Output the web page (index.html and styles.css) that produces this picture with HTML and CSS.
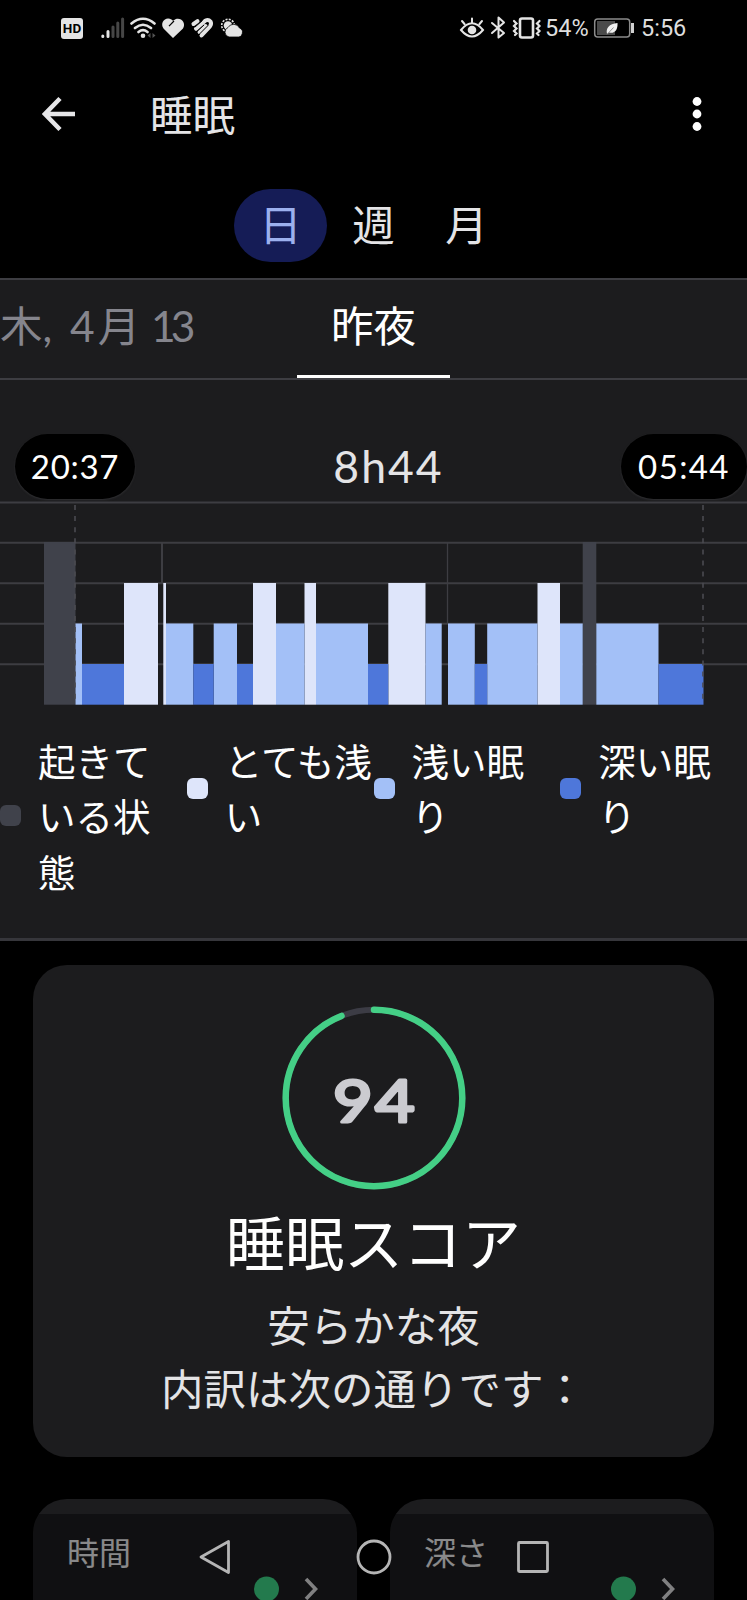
FILE: index.html
```html
<!DOCTYPE html>
<html lang="ja">
<head>
    <meta charset="UTF-8">
    <meta name="viewport" content="width=device-width, initial-scale=1.0">
    <title>睡眠</title>
    <link rel="stylesheet" href="styles.css">
</head>
<body>

    <div class="status">
        <svg class="status-left" width="190" height="26" viewBox="58 15 190 26">
            <rect x="61" y="18" width="22" height="21" rx="3" fill="#e4e4e4"/>
            <text x="72" y="33.300" class="hd">HD</text>
            <g stroke-width="3" stroke-linecap="round">
                <path d="M102.800 36v.5M108 31.500v5" stroke="#e4e4e4"/>
                <path d="M113 27v9.500M117.800 23v13.500M122.600 19v17.500" stroke="#464646"/>
            </g>
            <g fill="none" stroke="#e4e4e4" stroke-width="2.600" stroke-linecap="round">
                <path d="M131.500 23.500q11.500-9.500 23 0M135 28q8-6.500 16 0M138.500 32q4.500-3.600 9 0"/>
            </g>
            <circle cx="143" cy="35.800" r="2.300" fill="#e4e4e4"/>
            <path d="M150.500 33v5l-3-2.500zM152.500 33v5l3-2.500z" fill="#555"/>
            <path d="M173 38l-9.500-9.500c-4-6 2-12.500 8-9l1.500 1.200c6-5.500 14 1 10 7.800z" fill="#e4e4e4"/>
            <path d="M174 21l-5 5.200" stroke="#000" stroke-width="1.200"/>
            <g fill="none" stroke="#e4e4e4" stroke-width="4" stroke-linecap="round" stroke-linejoin="round">
                <path d="M193.500 24l4-2.800M196 28.800l9.500-8.300q3-1.300 5 1 1.300 2.500-.5 4.800L201.500 35.500M199.500 32l6-6"/>
            </g>
            <path d="M195 27l7.500-6.500M198.500 35l9.500-9.500M197 31.500l7-6.500" stroke="#000" stroke-width="1"/>
            <circle cx="228" cy="25.500" r="6.300" fill="none" stroke="#e4e4e4" stroke-width="1.600" stroke-dasharray="2 1.300"/>
            <circle cx="228" cy="25.500" r="4.300" fill="#e4e4e4"/>
            <path d="M229 37a5 5 0 0 1-1-9.500 6.500 6.500 0 0 1 11.500.5 4.700 4.700 0 0 1-2.500 9z" fill="#e4e4e4" stroke="#000" stroke-width=".8"/>
        </svg>
        <svg class="status-icons" width="84" height="26" viewBox="458 15 84 26">
            <g fill="none" stroke="#e4e4e4" stroke-width="2" stroke-linecap="round">
                <path d="M461 30q11-13.500 22 0-11 13-22 0zM472 22.500v-4M464.500 24l-2.500-3M479.500 24l2.500-3"/>
                <path d="M492 23l12 10-5.500 4.500V17.500l5.500 5-12 10.500" stroke-linejoin="round"/>
                <rect x="520" y="18.500" width="13" height="19" rx="2" stroke-width="2.600"/>
                <path d="M514 21l2.500 2.500-2.500 2.500 2.500 2.500-2.500 2.500 2.500 2.500-1.500 1.500M539.500 21l-2.500 2.500 2.500 2.500-2.500 2.500 2.500 2.500-2.500 2.500 1.500 1.500" stroke-width="2.200"/>
            </g>
            <circle cx="472" cy="30" r="4.300" fill="#e4e4e4"/>
        </svg>
        <span class="status-text">54%</span>
        <svg class="battery" width="42" height="22" viewBox="593 17 42 22">
            <rect x="594.700" y="19" width="35" height="18" rx="3" fill="none" stroke="#8a8a8a" stroke-width="1.500"/>
            <rect x="597" y="21" width="18" height="14" fill="#4a4a4a"/>
            <path d="M631 23h3v10h-3z" fill="#d0d0d0"/>
            <path d="M607 34c-1.500-6 2-10 10.500-11 .5 7-3 11-8.500 9.500z" fill="#f0f0f0"/>
            <path d="M607 34.500l6.500-7" stroke="#777" stroke-width=".8"/>
        </svg>
        <span class="status-text clock">5:56</span>
    </div>

    <header class="appbar">
        <svg width="34" height="36" viewBox="0 0 34 36">
            <path d="M33 18H3M18 2.500L3 18 18 33.500" fill="none" stroke="#e6e6e8" stroke-width="4.500"/>
        </svg>
        <h1>睡眠</h1>
        <svg width="10" height="36" viewBox="0 0 10 36" fill="#fff">
            <circle cx="5" cy="5.500" r="4.400"/>
            <circle cx="5" cy="18" r="4.400"/>
            <circle cx="5" cy="30.500" r="4.400"/>
        </svg>
    </header>

    <nav class="periods">
        <span class="period active">日</span>
        <span class="period">週</span>
        <span class="period">月</span>
    </nav>

    <section class="panel">
        <div class="dates">
            <span class="date">木, <span class="month">4</span>月 <span class="day">13</span></span>
            <span class="date current">昨夜</span>
            <span></span>
        </div>

        <div class="times">
            <span class="time">20:37</span>
            <span class="total">8h44</span>
            <span class="time end">05:44</span>
        </div>

        <svg class="chart" width="747" height="205" viewBox="0 501 747 205">
            <g class="grid">
                <path d="M0 502.500h747M0 542.800h747M0 583.200h747M0 623.800h747M0 664.200h747"/>
                <path d="M162 542v41"/>
                <path d="M447.500 542v81" stroke-width="1.300"/>
            </g>
            <g class="awake">
                <rect x="44" y="542" width="31.500" height="162.700"/>
                <rect x="582.700" y="542" width="13.600" height="162.700"/>
            </g>
            <g class="very-light">
                <rect x="124" y="583" width="34" height="121.700"/>
                <rect x="163.300" y="583" width="2.700" height="121.700"/>
                <rect x="253" y="583" width="23" height="121.700"/>
                <rect x="304.500" y="583" width="11.500" height="121.700"/>
                <rect x="388.300" y="583" width="37.200" height="121.700"/>
                <rect x="537.500" y="583" width="22.500" height="121.700"/>
            </g>
            <g class="light">
                <rect x="75.500" y="623.500" width="6.500" height="81.200"/>
                <rect x="166" y="623.500" width="27.300" height="81.200"/>
                <rect x="213.700" y="623.500" width="23.300" height="81.200"/>
                <rect x="276" y="623.500" width="28.500" height="81.200"/>
                <rect x="316" y="623.500" width="52" height="81.200"/>
                <rect x="425.500" y="623.500" width="16.200" height="81.200"/>
                <rect x="448" y="623.500" width="26.800" height="81.200"/>
                <rect x="487.200" y="623.500" width="50.300" height="81.200"/>
                <rect x="560" y="623.500" width="22.700" height="81.200"/>
                <rect x="596.300" y="623.500" width="62.200" height="81.200"/>
            </g>
            <g class="deep">
                <rect x="82" y="664" width="42" height="40.700"/>
                <rect x="193.300" y="664" width="20.400" height="40.700"/>
                <rect x="237" y="664" width="16" height="40.700"/>
                <rect x="368" y="664" width="20.300" height="40.700"/>
                <rect x="474.800" y="664" width="12.400" height="40.700"/>
                <rect x="658.500" y="664" width="45" height="40.700"/>
            </g>
            <path class="dashes" d="M75 505v199M703 505v199"/>
        </svg>

        <ul class="legend">
            <li><i class="swatch awake"></i><span>起きて<br>いる状<br>態</span></li>
            <li><i class="swatch very-light"></i><span>とても浅<br>い</span></li>
            <li><i class="swatch light"></i><span>浅い眠<br>り</span></li>
            <li><i class="swatch deep"></i><span>深い眠<br>り</span></li>
        </ul>
    </section>

    <section class="score">
        <svg width="184" height="184" viewBox="0 0 184 184">
            <circle cx="92" cy="92" r="88.300" fill="none" stroke="#3c3c45" stroke-width="6"/>
            <circle class="ring" cx="92" cy="92" r="88.300" pathLength="100" transform="rotate(-90 92 92)"/>
            <text class="points" transform="translate(93 116) scale(1.18 1)">94</text>
        </svg>
        <h2>睡眠スコア</h2>
        <p>安らかな夜<br>内訳は次の通りです：</p>
    </section>

    <div class="tiles">
        <div class="tile">
            <h3>時間</h3>
            <div class="more">
                <span></span>
                <svg width="25" height="26" viewBox="0 0 25 26"><circle cx="12.500" cy="13" r="12.500" fill="#3bcb80"/></svg>
                <svg width="16" height="26" viewBox="0 0 16 26"><path d="M3 3l9.500 10L3 23" fill="none" stroke="#d5d5d8" stroke-width="3.600"/></svg>
            </div>
        </div>
        <div class="tile">
            <h3>深さ</h3>
            <div class="more">
                <span>十</span>
                <svg width="25" height="26" viewBox="0 0 25 26"><circle cx="12.500" cy="13" r="12.500" fill="#3bcb80"/></svg>
                <svg width="16" height="26" viewBox="0 0 16 26"><path d="M3 3l9.500 10L3 23" fill="none" stroke="#d5d5d8" stroke-width="3.600"/></svg>
            </div>
        </div>
    </div>

    <!-- Android navigation bar, over the page -->
    <div class="navbar">
        <svg width="36" height="36" viewBox="0 0 36 36"><path d="M31.500 2.500v31L4 18z"/></svg>
        <svg width="36" height="36" viewBox="0 0 36 36"><circle cx="18" cy="18" r="16"/></svg>
        <svg width="36" height="36" viewBox="0 0 36 36"><rect x="3.500" y="3.500" width="29" height="29" rx="1"/></svg>
    </div>

</body>
</html>
```

FILE: styles.css
```css
* {
    box-sizing: border-box;
}

body {
    margin: 0;
    width: 747px;
    height: 1600px;
    position: relative;
    overflow: hidden;
    background: #000;
    color: #e4e4e6;
    font-family: Lato, "Noto Sans CJK JP", sans-serif;
}

h1, h2, h3, p, ul {
    margin: 0;
    padding: 0;
    font-weight: 400;
}

svg {
    display: block;
    flex: none;
}

/* status bar */
.status {
    display: flex;
    align-items: center;
    height: 56px;
    padding-left: 58px;
}

.status-icons {
    margin-left: 210px;
}

.status-text {
    width: 51px;
    padding-left: 3px;
    font: 23.5px/57px Roboto, sans-serif;
    color: #dedede;
}

.clock {
    padding-left: 6px;
}

.hd {
    font: bold 13.5px Roboto, sans-serif;
    text-anchor: middle;
    fill: #000;
}

/* title bar */
.appbar {
    display: flex;
    align-items: center;
    height: 116px;
    padding: 0 45px 0 42px;
}

.appbar h1 {
    flex: 1;
    margin-left: 74px;
    font-size: 42.5px;
    line-height: 59px;
}

.periods {
    display: flex;
    height: 106px;
    padding: 17px 0 0 234px;
}

.period {
    width: 93px;
    height: 73px;
    border-radius: 37px;
    font-size: 42.5px;
    line-height: 72px;
    text-align: center;
}

.period.active {
    background: #151c56;
    color: #9cb0ee;
}

/* night panel */
.panel {
    height: 663px;
    background: #1c1c1e;
    border-top: 2px solid #3d3d42;
    border-bottom: 3px solid #36363b;
}

.dates {
    display: grid;
    grid-template-columns: 297px 153px 1fr;
    height: 100px;
    border-bottom: 2px solid #3d3d42;
}

.date {
    font-size: 42.5px;
    line-height: 92px;
    color: #85858d;
    white-space: nowrap;
}

.month {
    margin-left: 7px;
    letter-spacing: 3px;
}

.day {
    letter-spacing: -5px;
}

.current {
    height: 98px;
    border-bottom: 3px solid #fff;
    color: #fff;
    text-align: center;
}

.times {
    display: grid;
    grid-template-columns: 120px 1fr 126px;
    height: 121px;
    padding: 54px 0 0 15px;
}

.time {
    height: 65px;
    border-radius: 33px;
    background: #000;
    box-shadow: 0 1px 2px #303033;
    color: #fff;
    font-size: 33px;
    line-height: 65px;
    text-align: center;
    letter-spacing: 0.7px;
}

.time.end {
    letter-spacing: 1.4px;
}

.total {
    padding-left: 21px;
    font-size: 44.5px;
    line-height: 63px;
    text-align: center;
    letter-spacing: 2px;
}

.grid {
    fill: none;
    stroke: #3d3d42;
    stroke-width: 2;
}

.dashes {
    fill: none;
    stroke: #4a4a50;
    stroke-width: 1.6;
    stroke-dasharray: 5 6.1;
}

.awake {
    fill: #40424b;
    background: #40424b;
}

.very-light {
    fill: #dee5fa;
    background: #dee5fa;
}

.light {
    fill: #a3c0f7;
    background: #a3c0f7;
}

.deep {
    fill: #4e77da;
    background: #4e77da;
}

.legend {
    display: grid;
    grid-template-columns: repeat(4, 186.75px);
    align-items: start;
    padding-top: 28px;
    list-style: none;
    color: #fff;
    font-size: 37.5px;
    line-height: 55.3px;
}

.legend li {
    display: flex;
    align-items: center;
    gap: 17px;
    white-space: nowrap;
}

.swatch {
    flex: none;
    width: 21px;
    height: 21px;
    margin-bottom: 2px;
    border-radius: 6px;
}

/* score card */
.score {
    display: flex;
    flex-direction: column;
    align-items: center;
    width: 681px;
    height: 492px;
    margin: 24px auto 0;
    padding-top: 41px;
    border-radius: 34px;
    background: #1c1c1e;
}

.ring {
    fill: none;
    stroke: #44cf86;
    stroke-width: 6.5;
    stroke-linecap: round;
    stroke-dasharray: 94 6;
}

.points {
    font-size: 58px;
    letter-spacing: 2px;
    text-anchor: middle;
    fill: #cbcbd0;
    stroke: #cbcbd0;
    stroke-width: 3.2;
    stroke-linejoin: round;
}

.score h2 {
    margin-top: 12px;
    color: #fff;
    font-size: 59px;
    line-height: 84px;
}

.score p {
    margin-top: 9px;
    font-size: 42.5px;
    line-height: 62.5px;
    text-align: center;
}

/* detail tiles */
.tiles {
    display: grid;
    grid-template-columns: 324px 324px;
    gap: 33px;
    margin: 42px 33px 0;
}

.tile {
    height: 101px;
    padding: 31px 38px 0 34px;
    border-radius: 34px 34px 0 0;
    background: #1c1c1e;
    overflow: hidden;
}

.tile h3 {
    font-size: 32px;
    line-height: 46px;
}

.more {
    display: flex;
    gap: 24px;
}

.more span {
    flex: 1;
    padding-top: 14px;
    font-size: 42.5px;
    line-height: 60px;
}

.navbar {
    position: absolute;
    left: 0;
    bottom: 0;
    display: flex;
    justify-content: center;
    gap: 123px;
    width: 100%;
    height: 86px;
    padding-top: 25px;
    background: rgba(0, 0, 0, 0.4);
}

.navbar svg {
    fill: none;
    stroke: #b5b5b5;
    stroke-width: 2.8;
    stroke-linejoin: round;
}
```
